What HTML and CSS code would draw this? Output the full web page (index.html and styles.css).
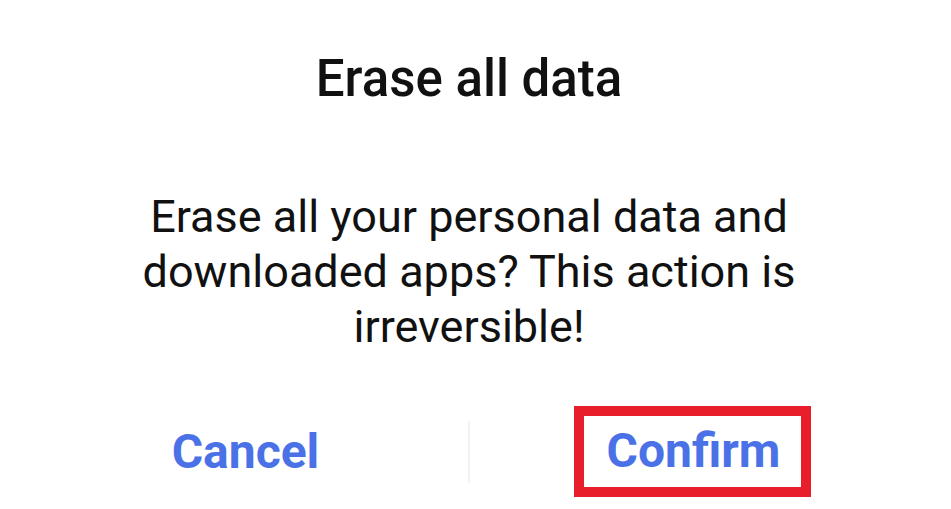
FILE: index.html
```html
<!DOCTYPE html>
<html lang="en">
<head>
    <meta charset="UTF-8">
    <title>Erase all data</title>
    <link rel="stylesheet" href="styles.css">
</head>
<body>
    <div class="dialog">
        <h1 class="dialog-title">Erase all data</h1>
        <p class="dialog-message">Erase all your personal data and downloaded apps? This action is irreversible!</p>
        <div class="dialog-actions">
            <button class="action">Cancel</button>
            <span class="divider"></span>
            <button class="action action-confirm">Confirm</button>
        </div>
    </div>
</body>
</html>
```

FILE: styles.css
```css
/* Dialog de confirmacion */
body {
    margin: 0;
    background-color: #fff;
    font-family: Roboto, "Noto Sans", sans-serif;
    color: #111;
}
.dialog {
    width: 892px;
    height: 509px;
    margin-left: 23px;
    display: flex;
    flex-direction: column;
    align-items: center;
}
.dialog-title {
    margin: 49px 0 0;
    font-size: 51px;
    font-weight: 500;
    line-height: 60px;
}
.dialog-message {
    margin: 80px 0 0;
    width: 700px;
    text-align: center;
    font-size: 45px;
    line-height: 55px;
}
.dialog-actions {
    margin-top: 52px;
    width: 100%;
    display: grid;
    grid-template-columns: 1fr 2px 1fr;
    align-items: center;
}
.action {
    background: none;
    border: none;
    font-family: Roboto, sans-serif;
    font-size: 48px;
    font-weight: 700;
    line-height: 56px;
    color: #4a72e6;
    padding: 0;
    justify-self: center;
}
.action-confirm {
    border: 10px solid #e81e2a;
    padding: 7px 21px 8px 23px;
}
.divider {
    height: 62px;
    background-color: #f2f2f2;
}
```
